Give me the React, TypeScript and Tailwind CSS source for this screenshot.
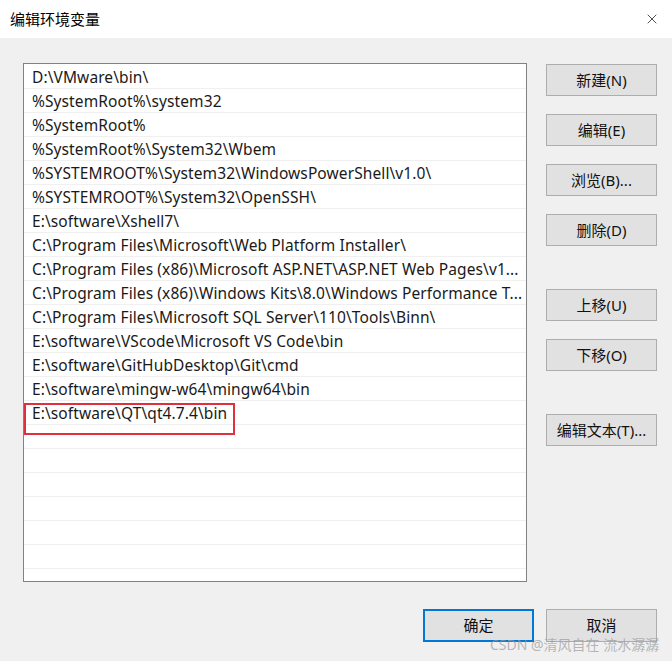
import { X } from "lucide-react";

const paths = [
  "D:\\VMware\\bin\\",
  "%SystemRoot%\\system32",
  "%SystemRoot%",
  "%SystemRoot%\\System32\\Wbem",
  "%SYSTEMROOT%\\System32\\WindowsPowerShell\\v1.0\\",
  "%SYSTEMROOT%\\System32\\OpenSSH\\",
  "E:\\software\\Xshell7\\",
  "C:\\Program Files\\Microsoft\\Web Platform Installer\\",
  "C:\\Program Files (x86)\\Microsoft ASP.NET\\ASP.NET Web Pages\\v1...",
  "C:\\Program Files (x86)\\Windows Kits\\8.0\\Windows Performance T...",
  "C:\\Program Files\\Microsoft SQL Server\\110\\Tools\\Binn\\",
  "E:\\software\\VScode\\Microsoft VS Code\\bin",
  "E:\\software\\GitHubDesktop\\Git\\cmd",
  "E:\\software\\mingw-w64\\mingw64\\bin",
  "E:\\software\\QT\\qt4.7.4\\bin",
];

const font = { fontFamily: '"Noto Sans", "Noto Sans CJK SC", sans-serif' };

const btnCls =
  "h-[32px] w-[111px] border border-[#adadad] bg-[#e1e1e1] text-[15px] text-[#111] flex items-center justify-center";

function Btn({ label, className = "" }: { label: string; className?: string }) {
  return <div className={`${btnCls} ${className}`}>{label}</div>;
}

export default function App() {
  const rows = [...paths, ...Array(7).fill("")];
  return (
    <div
      className="relative w-[672px] h-[661px] bg-[#f0f0f0] flex flex-col overflow-hidden"
      style={font}
    >
      {/* title bar */}
      <div className="h-[38px] bg-white flex items-center justify-between pl-[10px] pr-[12px]">
        <span className="text-[15px] text-black">编辑环境变量</span>
        <X size={16} strokeWidth={1.2} className="text-[#222]" />
      </div>

      <div className="flex pt-[25px]">
        {/* list */}
        <div className="relative ml-[23px] w-[504px] h-[519px] pt-[1px] border border-[#828282] bg-white overflow-hidden">
          {rows.map((p, i) => (
            <div
              key={i}
              className="h-[24px] border-b border-[#f0f0f0] pl-[8px] pt-[2px] flex items-center whitespace-nowrap text-[15.5px] tracking-[0.1px] text-[#1a1a1a]"
            >
              {p}
            </div>
          ))}
          <div className="absolute left-0 top-[339px] w-[211px] h-[32px] border-2 border-[#e0303e]" />
        </div>

        {/* right buttons */}
        <div className="ml-[19px] pt-[1px] flex flex-col">
          <Btn label="新建(N)" />
          <Btn label="编辑(E)" className="mt-[18px]" />
          <Btn label="浏览(B)..." className="mt-[18px]" />
          <Btn label="删除(D)" className="mt-[18px]" />
          <Btn label="上移(U)" className="mt-[43px]" />
          <Btn label="下移(O)" className="mt-[18px]" />
          <Btn label="编辑文本(T)..." className="mt-[43px]" />
        </div>
      </div>

      {/* bottom buttons */}
      <div className="flex justify-end gap-[12px] pr-[15px] mt-[27px]">
        <div className="h-[33px] w-[111px] border-2 border-[#0078d7] bg-[#e1e1e1] text-[15px] text-[#111] flex items-center justify-center">
          确定
        </div>
        <div className="h-[33px] w-[111px] border border-[#adadad] bg-[#e1e1e1] text-[15px] text-[#111] flex items-center justify-center">
          取消
        </div>
      </div>

      <div className="absolute left-[490px] top-[634px] text-[14px] text-[#9a9a9a]/70 whitespace-nowrap">
        CSDN @清风自在 流水潺潺
      </div>
    </div>
  );
}
